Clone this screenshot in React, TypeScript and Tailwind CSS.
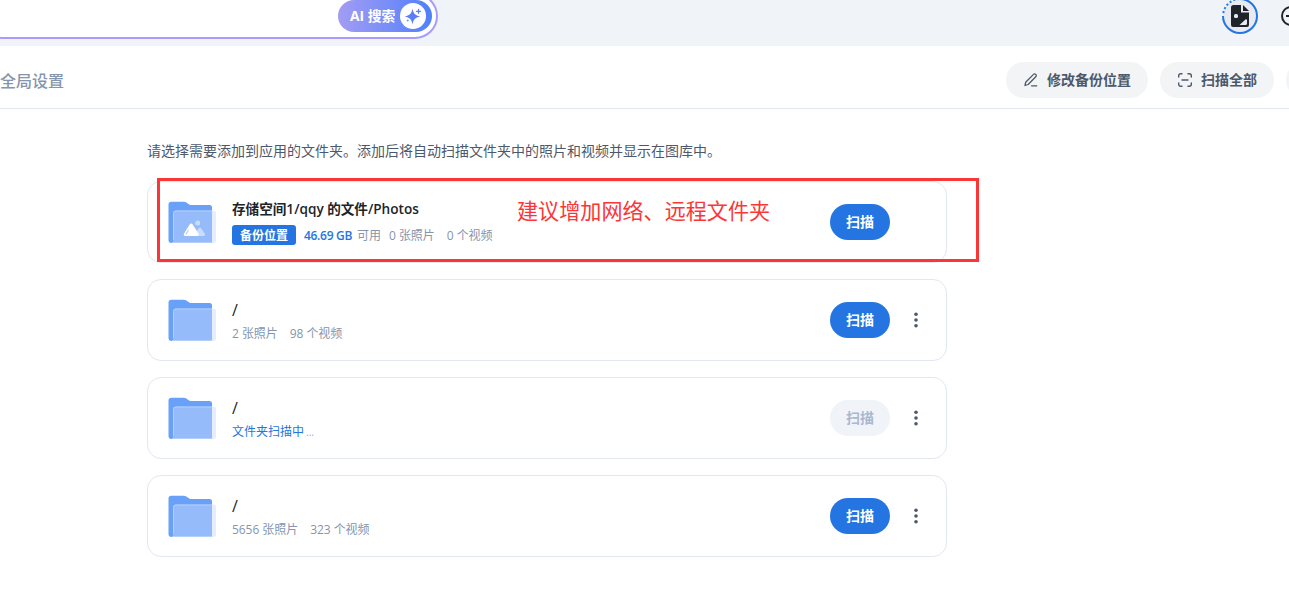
import React from 'react';

type Folder = {
  id: number;
  name: string;
  photos?: string;
  videos?: string;
  free?: string;
  isBackup?: boolean;
  scanning?: boolean;
};

const folders: Folder[] = [
  { id: 1, name: '存储空间1/qqy 的文件/Photos', photos: '0 张照片', videos: '0 个视频', free: '46.69 GB', isBackup: true },
  { id: 2, name: '/', photos: '2 张照片', videos: '98 个视频' },
  { id: 3, name: '/', scanning: true },
  { id: 4, name: '/', photos: '5656 张照片', videos: '323 个视频' },
];

const FolderIcon = ({ picture }: { picture?: boolean }) => (
  <svg className="w-12 h-12 shrink-0" viewBox="0 0 48 48" fill="none">
    <path d="M0.5 6.5a2.8 2.8 0 0 1 2.8-2.8h12.4c1 0 1.8.3 2.6.8l2.9 1.9c.7.5 1.5.7 2.3.7H41.5a2.5 2.5 0 0 1 2.5 2.5V45H3.5a3 3 0 0 1-3-3z" fill="#69A1F9" />
    <path d="M5 15a2.5 2.5 0 0 1 2.5-2.5H44V45H4.500c.4-.6.5-1.300.5-2z" fill="#96BBFA" />
    <path d="M44 12.500h1.500A2.500 2.500 0 0 1 48 15v27.500a2.500 2.500 0 0 1-2.500 2.500H44z" fill="#E6EEFD" />
    <path d="M5.500 42V15.500A2.500 2.500 0 0 1 8 13h36M4 44.500h40" stroke="#B5CFFC" />
    {picture && (
      <>
        <circle cx="29.700" cy="25" r="2.500" fill="#C9DCFD" />
        <path d="M25 38l5.800-7.700c.6-.9 1.600-.9 2.200 0l3.700 5.300c.9 1.300.2 2.400-1.300 2.400z" fill="#C9DCFD" />
        <path d="M16.200 35.300l5.500-8.900c.8-1.200 2.200-1.200 3 0l5.600 8.900c1 1.600.3 2.700-1.500 2.700H17.700c-1.800 0-2.500-1.100-1.500-2.700z" fill="#fff" />
        <path d="M18 36l2.200-3.500" stroke="#B5CFFC" strokeWidth="1.200" strokeLinecap="round" />
      </>
    )}
  </svg>
);

const SparkIcon = () => (
  <svg className="w-[26px] h-[26px]" viewBox="0 0 26 26">
    <circle cx="13" cy="13" r="13" fill="#fff" />
    <path d="M12.500 5.500c.9 5 2.600 6.900 7.700 8-5.100 1.100-6.800 3-7.700 8-.9-5-2.600-6.900-7.700-8 5.100-1.100 6.800-3 7.700-8z" fill="#5B7DF5" />
    <path d="M18.500 6.300v4M16.500 8.300h4" stroke="#5B7DF5" strokeWidth="1.300" strokeLinecap="round" />
    <circle cx="7.700" cy="17.500" r="1.100" fill="#8394F5" />
  </svg>
);

const AvatarIcon = () => (
  <svg className="w-9 h-9 shrink-0" viewBox="0 0 36 36" fill="none">
    <circle cx="18" cy="18" r="17" fill="#E7EBF1" />
    <path d="M18 1a17 17 0 1 1-17 17" stroke="#2475E2" strokeWidth="2" />
    <path d="M1.300 15A17 17 0 0 1 17 1" stroke="#2475E2" strokeWidth="2" strokeDasharray="2 2.200" />
    <path d="M11.500 7H19v7.500h8V27a2 2 0 0 1-2 2H11a2 2 0 0 1-2-2V9.500A2.500 2.500 0 0 1 11.500 7z" fill="#20242A" />
    <path d="M21 7l6 6h-6z" fill="#20242A" />
    <rect x="12" y="16" width="4" height="4" rx="1.500" fill="#E7EBF1" />
    <path d="M17.500 27l6-5.500c.5-.5 1.500-.3 1.500.5v3.500a1.500 1.500 0 0 1-1.500 1.500z" fill="#E7EBF1" />
  </svg>
);

const PenIcon = () => (
  <svg className="w-4 h-4" viewBox="0 0 16 16" fill="none" stroke="#4D596B" strokeWidth="1.300" strokeLinecap="round" strokeLinejoin="round">
    <path d="M2 13.500l.7-3.300 7.800-7.800a1.500 1.500 0 0 1 2.200 0l.1.1a1.500 1.500 0 0 1 0 2.200l-7.700 7.800zM8.500 13.800h5.200" />
  </svg>
);

const ScanIcon = () => (
  <svg className="w-4 h-4" viewBox="0 0 16 16" fill="none" stroke="#4D596B" strokeWidth="1.400" strokeLinecap="round">
    <path d="M1.700 5V3.700a2 2 0 0 1 2-2H5M11 1.700h1.300a2 2 0 0 1 2 2V5M14.300 11v1.300a2 2 0 0 1-2 2H11M5 14.300H3.700a2 2 0 0 1-2-2V11M5 8h6" />
  </svg>
);

const FolderCard = ({ folder }: { folder: Folder }) => (
  <div className="flex items-center h-[82px] px-5 border border-[#E2E7F0] rounded-[14px]">
    <FolderIcon picture={folder.isBackup} />
    <div className={`flex-1 ml-4 ${folder.isBackup ? '' : 'pt-[3px]'}`}>
      {folder.isBackup ? (
        <p className="h-5 leading-5 text-[13.6px] font-semibold text-[#20242A] whitespace-nowrap">{folder.name}</p>
      ) : (
        <p className="h-5 leading-[22px] text-base font-medium text-[#20242A]">{folder.name}</p>
      )}
      <div className={`flex items-center h-5 text-xs text-[#8595AD] whitespace-nowrap ${folder.isBackup ? 'mt-[6px]' : 'mt-[5px]'}`}>
        {folder.isBackup && (
          <>
            <span className="w-16 h-5 pt-px leading-5 text-center rounded-[3px] bg-[#2475E2] text-white font-semibold">备份位置</span>
            <span className="w-[49px] pt-0.5 ml-2 tracking-[-0.3px] font-semibold text-[#2475E2]">{folder.free}</span>
            <span className="pt-0.5 ml-1 mr-2">可用</span>
          </>
        )}
        {folder.scanning ? (
          <span className="text-[#2475E2]">
            文件夹扫描中<span className="ml-[2px] text-[10px] opacity-60">...</span>
          </span>
        ) : (
          <div className={`flex gap-3 tracking-[-0.05px] ${folder.isBackup ? 'pt-0.5' : ''}`}>
            <span>{folder.photos}</span>
            <span>{folder.videos}</span>
          </div>
        )}
      </div>
    </div>
    <button
      className={`w-[60px] h-9 rounded-full text-sm font-bold ${
        folder.scanning ? 'bg-[#F0F4F9] text-[#AAB8CE]' : 'bg-[#2475E2] text-white'
      }`}
    >
      扫描
    </button>
    {folder.isBackup ? (
      <div className="w-9" />
    ) : (
      <button className="flex justify-center w-9 pl-4">
        <svg className="w-5 h-5 shrink-0" viewBox="0 0 20 20" fill="#4D596B">
          <circle cx="10" cy="4.200" r="1.800" />
          <circle cx="10" cy="10" r="1.800" />
          <circle cx="10" cy="15.800" r="1.800" />
        </svg>
      </button>
    )}
  </div>
);

const App = () => {
  return (
    <div className="relative w-[1289px] h-[607px] overflow-hidden bg-white font-['Open_Sans','Noto_Sans_CJK_SC',sans-serif]">
      <header className="flex items-start h-[46px] overflow-hidden bg-[#F0F4F9]">
        <div className="flex items-center justify-end shrink-0 w-[458px] h-[46px] -ml-5 -mt-[7px] pr-1 bg-white border-2 border-[#A99CF8] rounded-full">
          <button className="flex items-center w-[94px] h-8 pl-3 rounded-full bg-linear-to-r from-[#A29CF3] to-[#4F7FFA] text-white font-bold whitespace-nowrap">
            <span className="w-[50px] text-left text-[13.8px]">AI 搜索</span>
            <SparkIcon />
          </button>
        </div>
        <div className="flex items-center shrink-0 gap-[23px] h-8 ml-[784px]">
          <AvatarIcon />
          <svg className="w-5 h-5 shrink-0" viewBox="0 0 20 20" fill="none" stroke="#20242A" strokeWidth="2">
            <circle cx="10" cy="10" r="9" />
            <path d="M5 10h10" />
          </svg>
        </div>
      </header>

      <div className="flex items-center h-[63px] pb-px overflow-hidden border-b border-[#E2E7F0]">
        <h1 className="w-[1006px] pt-2 shrink-0 text-base leading-6 font-medium text-[#8595AD]">全局设置</h1>
        <div className="flex shrink-0 gap-3 pt-[6px] text-sm font-bold text-[#4D596B]">
          <button className="flex items-center gap-2 w-[142px] h-9 pl-[17px] rounded-full bg-[#F2F4F6] whitespace-nowrap">
            <PenIcon />
            修改备份位置
          </button>
          <button className="flex items-center gap-2 w-[114px] h-9 pl-[17px] rounded-full bg-[#F2F4F6] whitespace-nowrap">
            <ScanIcon />
            扫描全部
          </button>
          <button className="w-9 h-9 rounded-full bg-[#F2F4F6]" />
        </div>
      </div>

      <main className="w-[800px] ml-[147px] pt-[31px]">
        <p className="h-[41px] leading-[22px] text-sm text-[#4D596B] whitespace-nowrap">
          请选择需要添加到应用的文件夹。添加后将自动扫描文件夹中的照片和视频并显示在图库中。
        </p>
        <div className="flex flex-col gap-4">
          {folders.map((folder) => (
            <FolderCard key={folder.id} folder={folder} />
          ))}
        </div>
      </main>

      {/* note drawn over the first folder */}
      <div className="absolute left-[157px] top-[178px] w-[822px] h-[84px] border-3 border-[#FC3636]">
        <p className="ml-[357px] mt-[14px] leading-8 text-[21.1px] text-[#FC3636] whitespace-nowrap">建议增加网络、远程文件夹</p>
      </div>
    </div>
  );
};

export default App;
